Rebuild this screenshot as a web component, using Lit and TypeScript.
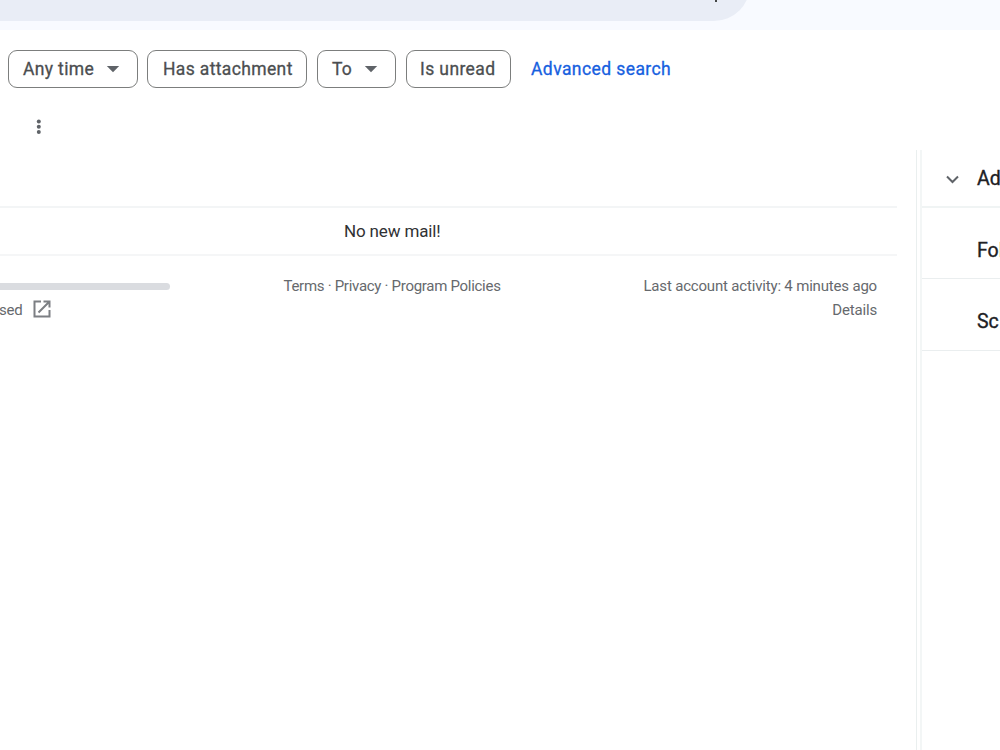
import { LitElement, html, css } from "lit";
import { customElement } from "lit/decorators.js";

@customElement("app-root")
export class AppRoot extends LitElement {
  static styles = css`
    :host { display: block; width: 1000px; height: 750px; overflow: hidden; background: #fff; font-family: Roboto, "Liberation Sans", sans-serif; color: #66696d; }
    * { box-sizing: border-box; }
    .page { display: flex; flex-direction: column; height: 750px; }
    .top { height: 30px; flex: none; background: #f8faff; overflow: hidden; display: flex; align-items: flex-end; padding-bottom: 9px; }
    .search { width: 750px; height: 72px; flex: none; border-radius: 0 36px 36px 0; background: #e9edf6; display: flex; justify-content: flex-end; padding: 51px 33px 0 0; }
    .tick { width: 2px; height: 2px; background: #444746; }
    .filters { height: 78px; flex: none; display: flex; align-items: flex-start; gap: 9px; padding: 20px 0 0 8px; font-size: 17.5px; font-weight: 400; -webkit-text-stroke: .3px; color: #4b4e50; }
    .chip { height: 38px; border: 1px solid #7c7e7d; border-radius: 9px; display: flex; align-items: center; white-space: nowrap; padding-left: 14px; line-height: 36px; }
    .any { width: 130px; letter-spacing: .35px; }
    .any svg { margin-left: 12px; }
    .has { width: 160px; padding-left: 15px; letter-spacing: .36px; }
    .to { width: 79px; letter-spacing: .2px; padding-left: 14px; margin-right: 1px; margin-left: 1px; }
    .to svg { margin-left: 12px; }
    .unread { width: 105px; letter-spacing: .4px; padding-left: 13px; }
    .adv { color: #1660df; line-height: 38px; margin-left: 11px; letter-spacing: .42px; white-space: nowrap; }
    .tools { height: 42px; flex: none; padding: 11px 0 0 35px; }
    svg { display: block; flex: none; }
    .body { flex: 1; display: flex; }
    .main { width: 897px; }
    .tab { height: 58px; border-bottom: 2px solid #f3f5f6; }
    .empty { height: 48px; border-bottom: 2px solid #f5f6f7; font-size: 17px; line-height: 46px; letter-spacing: -.15px; color: #303134; padding-left: 344px; }
    .foot { display: grid; grid-template-columns: 283.5px 299.5px 294px; padding-top: 18px; font-size: 15px; line-height: 24px; letter-spacing: -.18px; white-space: nowrap; }
    .bar { width: 170px; height: 7px; margin: 9px 0 8px; border-radius: 0 4px 4px 0; background: #dadce0; }
    .used { display: flex; align-items: center; height: 24px; margin-left: -1px; }
    .used svg { margin: -2px 0 0 10.5px; }
    .links { letter-spacing: -.29px; }
    .act { text-align: right; }
    .gutter { width: 20px; margin: 0 3px 0 0; border-right: 1px solid #eaefef; }
    .side { flex: 1; min-width: 0; border-left: 2px solid #f3f6f6; overflow: hidden; font-size: 19.5px; -webkit-text-stroke: .35px; color: #202124; }
    .item { display: flex; align-items: center; border-bottom: 1px solid #eaeeef; height: 72px; padding: 14px 0 0 55px; white-space: nowrap; }
    .second { height: 71px; }
    .first { height: 58px; border-bottom: 2px solid #f0f4f4; padding: 0 0 0 24px; }
    .first svg { margin: 2px 18px 0 0; }
  `;

  caret() {
    return html`<svg width="14" height="8" viewBox="0 0 14 8"><path d="M.8 1h12.4L7 7.3Z" fill="#5f6368"/></svg>`;
  }

  render() {
    return html`<div class="page">
      <div class="top"><div class="search"><div class="tick"></div></div></div>
      <div class="filters">
        <div class="chip any"><span>Any time</span>${this.caret()}</div>
        <div class="chip has"><span>Has attachment</span></div>
        <div class="chip to"><span>To</span>${this.caret()}</div>
        <div class="chip unread"><span>Is unread</span></div>
        <span class="adv">Advanced search</span>
      </div>
      <div class="tools"><svg width="8" height="16" viewBox="0 0 8 16" fill="#5f6368"><circle cx="3.8" cy="2.6" r="2"/><circle cx="3.8" cy="7.7" r="2"/><circle cx="3.8" cy="12.9" r="2"/></svg></div>
      <div class="body">
        <div class="main">
          <div class="tab"></div>
          <div class="empty"><span class="msg">No new mail!</span></div>
          <div class="foot">
            <div><div class="bar"></div><div class="used"><span>sed</span><svg width="18" height="18" viewBox="0 0 18 18" fill="none" stroke="#7c7f83" stroke-width="2"><path d="M8 1.5H1.5v15h15V10M10.5 1.5h6v6M16 2 5.5 12.5"/></svg></div></div>
            <div class="links">Terms · Privacy · Program Policies</div>
            <div class="act">Last account activity: 4 minutes ago<br>Details</div>
          </div>
        </div>
        <div class="gutter"></div>
        <div class="side">
          <div class="item first"><svg width="13" height="9" viewBox="0 0 13 9" fill="none" stroke="#5f6368" stroke-width="2"><path d="m1 1.5 5.5 5.5L12 1.5"/></svg>Ad</div>
          <div class="item second">Fol</div>
          <div class="item">Sc</div>
        </div>
      </div>
    </div>`;
  }
}
